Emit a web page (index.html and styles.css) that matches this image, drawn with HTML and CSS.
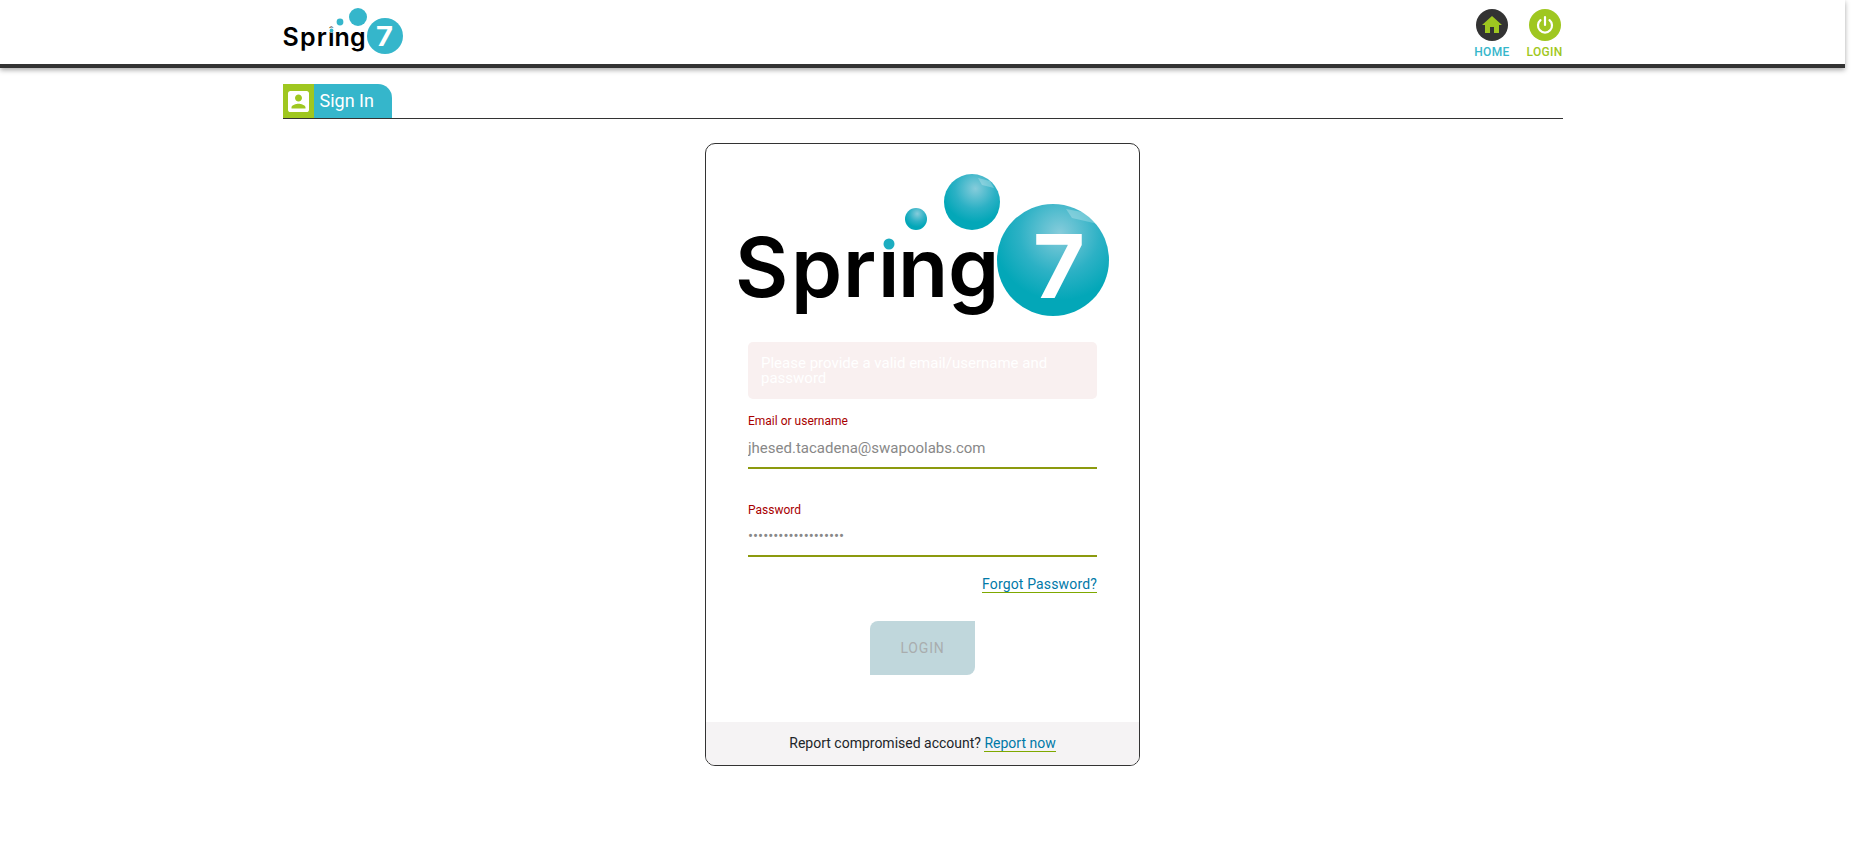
FILE: index.html
```html
<!DOCTYPE html>
<html lang="en">
<head>
  <meta charset="UTF-8" />
  <title>Spring7 - Sign In</title>
  <link rel="stylesheet" href="styles.css">
</head>
<body>

  <div class="page">
    <header class="topbar">
      <div class="wrap topbar-row">
        <svg class="logo-small" viewBox="283 6 122 52" width="122" height="52">
          <circle cx="358" cy="17" r="9" fill="#35b6cb"/>
          <circle cx="340" cy="22" r="3.4" fill="#35b6cb"/>
          <circle cx="385" cy="36" r="18" fill="#35b6cb"/>
          <text x="282.5 300 316.7 328 334.4 350" y="46" class="logo-word" font-size="25">Spring</text>
          <circle cx="331.5" cy="30" r="2.8" fill="#fff"/>
          <circle cx="331.5" cy="30.5" r="1.9" fill="#35b6cb"/>
          <text x="376" y="46" class="logo-seven" font-size="27" textLength="17" lengthAdjust="spacingAndGlyphs">7</text>
        </svg>
        <nav class="nav">
          <a class="nav-item nav-home">
            <span class="nav-icon">
              <svg viewBox="0 0 24 24" width="24" height="24"><path d="M10 20v-6h4v6h5v-8h3L12 3 2 12h3v8z" fill="#9fc720"/></svg>
            </span>
            HOME
          </a>
          <a class="nav-item nav-login">
            <span class="nav-icon">
              <svg viewBox="0 0 24 24" width="24" height="24" fill="none" stroke="#fff" stroke-width="2.2" stroke-linecap="round"><path d="M7.5 7.2a7 7 0 1 0 9 0"/><path d="M12 4v8"/></svg>
            </span>
            LOGIN
          </a>
        </nav>
      </div>
    </header>

    <main class="wrap">
      <div class="tab-row">
        <div class="tab">
          <span class="tab-icon">
            <svg viewBox="3 3 18 18" width="21" height="21"><path d="M3 5v14c0 1.1.89 2 2 2h14c1.1 0 2-.9 2-2V5c0-1.1-.9-2-2-2H5c-1.11 0-2 .9-2 2zm12 4c0 1.66-1.34 3-3 3s-3-1.34-3-3 1.34-3 3-3 3 1.34 3 3zm-9 8c0-2 4-3.1 6-3.1s6 1.1 6 3.1v1H6v-1z" fill="#fff"/></svg>
          </span>
          <span class="tab-label">Sign In</span>
        </div>
      </div>

      <section class="card">
        <svg class="logo-big" viewBox="733 170 380 160" width="380" height="160">
          <defs>
            <radialGradient id="ball" cx="0.56" cy="0.26" r="0.6">
              <stop offset="0" stop-color="#86ccdb"/>
              <stop offset="0.6" stop-color="#2cb1c5"/>
              <stop offset="1" stop-color="#03a7b8"/>
            </radialGradient>
          </defs>
          <circle cx="972" cy="202" r="28" fill="url(#ball)"/>
          <circle cx="916" cy="219" r="11" fill="url(#ball)"/>
          <circle cx="1053" cy="260" r="56" fill="url(#ball)"/>
          <polygon points="1066,209 1088,213 1098,224 1072,218" fill="#fff" opacity="0.25"/>
          <polygon points="978,178 990,181 994,188 982,185" fill="#fff" opacity="0.25"/>
          <text x="735 791 843 878 898 948" y="297" class="logo-word" font-size="82">Spring</text>
          <circle cx="889" cy="241" r="9" fill="#fff"/>
          <circle cx="889" cy="244" r="5.5" fill="#1cadc0"/>
          <text x="1033" y="298" class="logo-seven" font-size="88" textLength="52" lengthAdjust="spacingAndGlyphs">7</text>
        </svg>

        <form class="form">
          <div class="alert">Please provide a valid email/username and password</div>

          <label class="field-label" for="email">Email or username</label>
          <input class="field-input" id="email" type="text" value="jhesed.tacadena@swapoolabs.com">

          <label class="field-label field-gap" for="password">Password</label>
          <input class="field-input field-password" id="password" type="password" value="abcdefghijklmnopqrs">

          <div class="forgot"><a class="link">Forgot Password?</a></div>

          <div class="actions"><button class="btn-login" type="button" disabled>LOGIN</button></div>
        </form>

        <div class="card-footer">Report compromised account? <a class="link">Report now</a></div>
      </section>
    </main>
  </div>

</body>
</html>
```

FILE: styles.css
```css
body {
  margin: 0;
  background: #fff;
  font-family: Roboto, "Liberation Sans", sans-serif;
  overflow: hidden;
}
.page {
  width: 1845px;
}
.wrap {
  width: 1280px;
  margin: 0 auto;
}
.topbar {
  height: 64px;
  border-bottom: 4px solid #333;
  box-shadow: 0 2px 5px rgba(0,0,0,0.35);
}
.topbar-row {
  display: flex;
  justify-content: space-between;
  height: 64px;
}
.logo-small {
  display: block;
  margin-top: 6px;
}
.logo-word {
  font-family: Inter, sans-serif;
  font-weight: 600;
  fill: #000;
}
.logo-seven {
  font-family: Inter, sans-serif;
  font-weight: 700;
  fill: #fff;
}
.nav {
  display: flex;
  gap: 17px;
  padding-top: 9px;
}
.nav-item {
  display: flex;
  flex-direction: column;
  align-items: center;
  gap: 4px;
  font-size: 12px;
  font-weight: 500;
  line-height: 14px;
  letter-spacing: 0.3px;
}
.nav-home { color: #35b6cb; }
.nav-login { color: #9fc720; }
.nav-icon {
  width: 32px;
  height: 32px;
  border-radius: 50%;
  display: flex;
  align-items: center;
  justify-content: center;
}
.nav-home .nav-icon { background: #333; }
.nav-login .nav-icon { background: #9fc720; }

.tab-row {
  margin-top: 16px;
  border-bottom: 1px solid #333;
}
.tab {
  display: inline-flex;
  vertical-align: top;
  height: 34px;
  background: #35b6cb;
  border-top-right-radius: 14px;
  overflow: hidden;
}
.tab-icon {
  width: 31px;
  background: #9fc720;
  display: flex;
  align-items: center;
  justify-content: center;
}
.tab-label {
  color: #fff;
  font-size: 18px;
  line-height: 34px;
  padding: 0 18px 0 6px;
}

.card {
  width: 433px;
  margin: 24px auto 0;
  border: 1px solid #333;
  border-radius: 10px;
  overflow: hidden;
}
.logo-big {
  display: block;
  margin: 26px auto 12px;
}
.form {
  padding: 0 42px;
}
.alert {
  background: #f9f0f0;
  color: #fff;
  border-radius: 5px;
  font-size: 15px;
  line-height: 15px;
  padding: 13.5px 13px;
  margin-bottom: 15px;
}
.field-label {
  display: block;
  color: #a80000;
  font-size: 12px;
  line-height: 14px;
  margin-bottom: 2px;
}
.field-gap {
  margin-top: 34px;
}
.field-input {
  display: block;
  width: 100%;
  box-sizing: border-box;
  height: 39px;
  border: 0;
  border-bottom: 2px solid #8c9a0e;
  padding: 0 0 2px;
  outline: 0;
  color: #888;
  font-family: inherit;
  font-size: 15px;
}
.field-password {
  height: 38px;
}
.forgot {
  margin-top: 19px;
  text-align: right;
  font-size: 14px;
  line-height: 16px;
  height: 17px;
  letter-spacing: 0.15px;
}
.link {
  color: #0079a8;
  border-bottom: 1px solid #7fa800;
}
.actions {
  margin-top: 28px;
  text-align: center;
}
.btn-login {
  width: 105px;
  height: 54px;
  border: 0;
  border-radius: 8px 0 8px 0;
  background: #c0d7dc;
  color: #a9adae;
  font-family: inherit;
  font-size: 14px;
  font-weight: 400;
  letter-spacing: 0.8px;
}
.card-footer {
  margin-top: 47px;
  height: 43px;
  background: #f5f3f4;
  color: #212529;
  font-size: 14px;
  line-height: 42px;
  text-align: center;
}
```
